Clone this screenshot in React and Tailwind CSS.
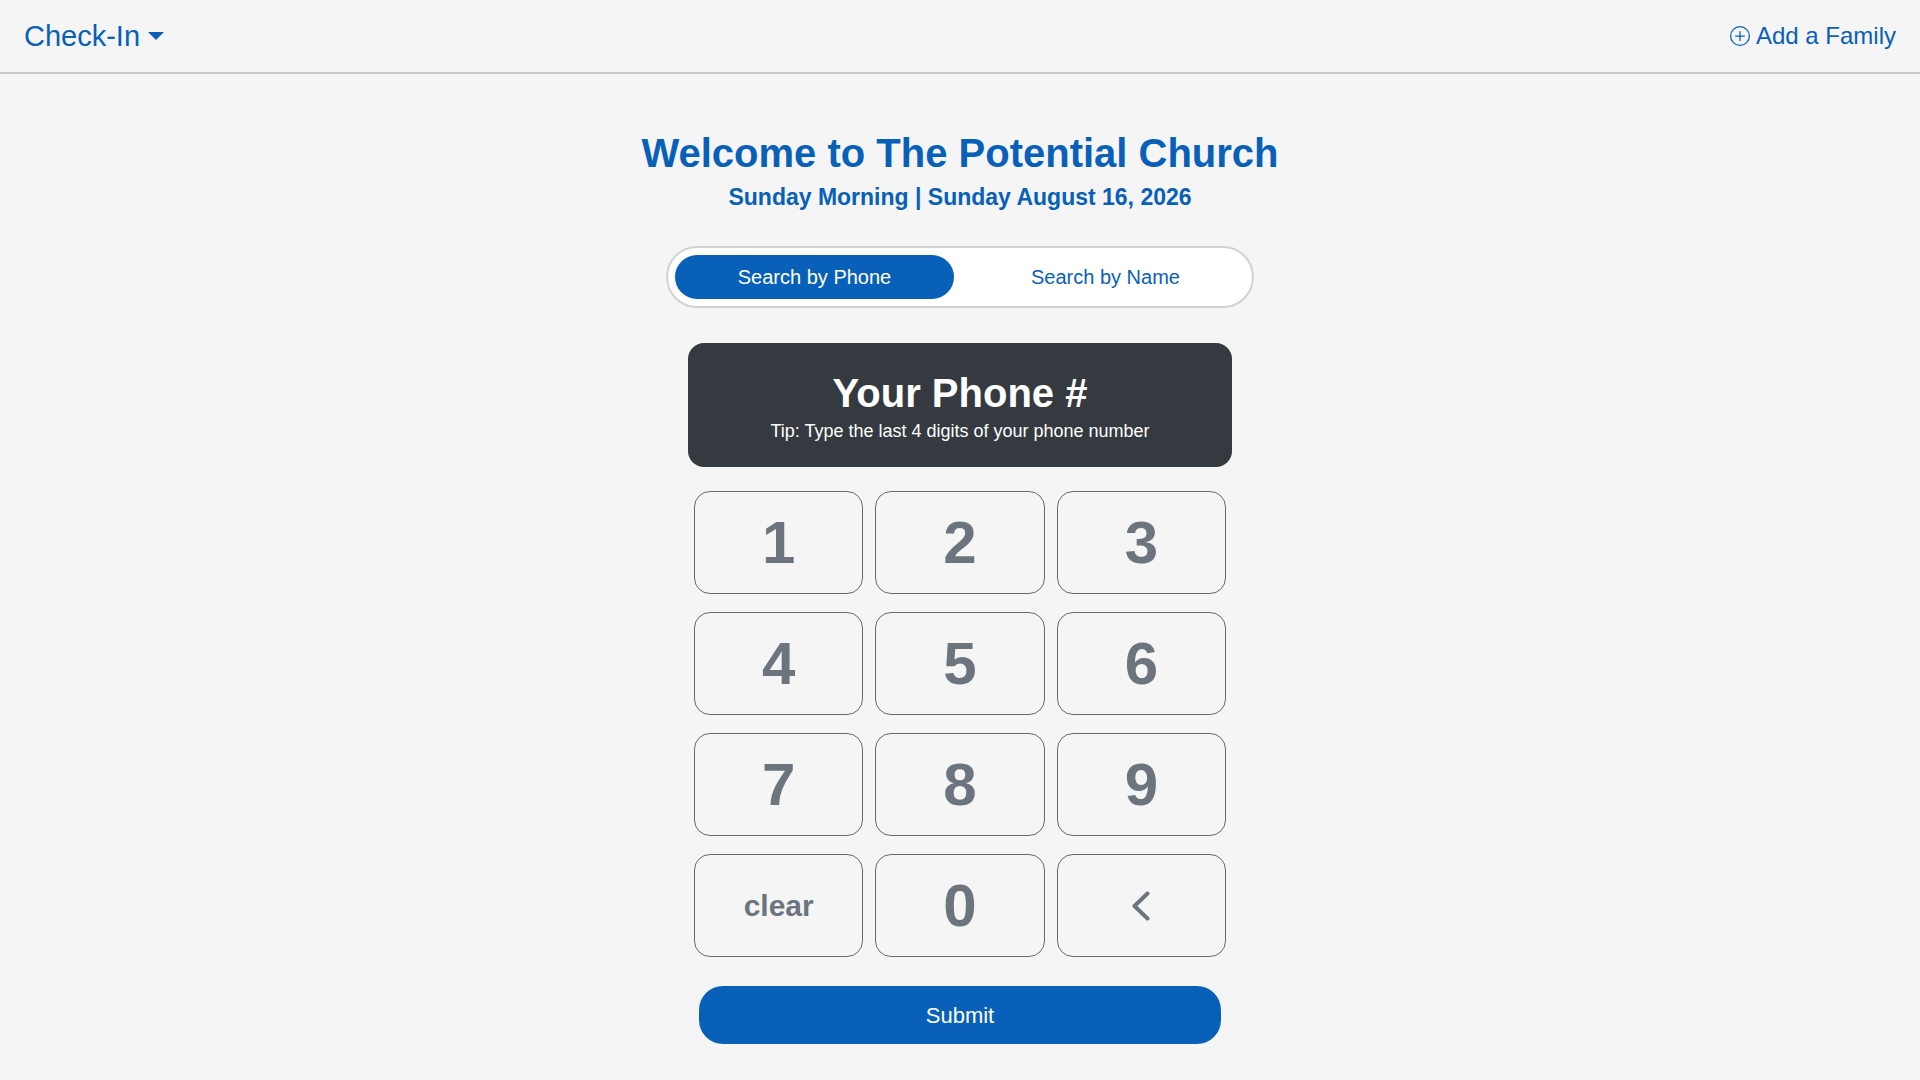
import React, { useState } from 'react';
import clsx from 'clsx';
import { BsPlusCircle } from 'react-icons/bs';

const digitKeys = ['1', '2', '3', '4', '5', '6', '7', '8', '9'];

function Key({ children, className, ...props }) {
    return (
        <button
            type="button"
            className={clsx(
                'h-[103px] flex items-center justify-center rounded-2xl border border-[#68696b] text-[#6c757d] font-bold hover:bg-gray-200',
                className
            )}
            {...props}
        >
            {children}
        </button>
    );
}

function SearchTab({ active, children, ...props }) {
    return (
        <button
            type="button"
            aria-pressed={active}
            className={clsx(
                'h-11 flex-1 rounded-full text-xl',
                active ? 'bg-[#0860b8] text-white' : 'text-[#0860b8]'
            )}
            {...props}
        >
            {children}
        </button>
    );
}

export default function App() {
    const [mode, setMode] = useState('phone');
    const [value, setValue] = useState('');

    const placeholder = mode === 'phone' ? 'Your Phone #' : 'Your Name';

    return (
        <div className="min-h-screen bg-[#f5f5f5] font-['Liberation_Sans',Arial,sans-serif] text-[#0860b8]">
            {/* Top bar */}
            <header className="h-[74px] px-6 flex items-center justify-between border-b-2 border-[#c9c9c9]">
                <button type="button" className="flex items-center gap-2 text-[29px] leading-8">
                    Check-In
                    <svg width="16" height="8" viewBox="0 0 16 8" fill="currentColor" aria-hidden="true">
                        <path d="M0 0h16L8 8z" />
                    </svg>
                </button>
                <a href="#add-family" className="flex items-center gap-1.5 text-2xl leading-8">
                    <BsPlusCircle size={20} />
                    Add a Family
                </a>
            </header>

            <main className="px-6 pt-[53px] pb-9 flex flex-col items-center">
                <h1 className="text-[40px] leading-[52px] text-center font-bold">
                    Welcome to The Potential Church
                </h1>
                <p className="mt-1 text-[23px] leading-7 text-center font-bold">
                    Sunday Morning | Sunday August 16, 2026
                </p>

                {/* Search mode */}
                <div className="mt-[35px] w-full max-w-[588px] p-[7px] flex gap-3 rounded-full border-2 border-[#d2d2d2] bg-white">
                    <SearchTab active={mode === 'phone'} onClick={() => setMode('phone')}>
                        Search by Phone
                    </SearchTab>
                    <SearchTab active={mode === 'name'} onClick={() => setMode('name')}>
                        Search by Name
                    </SearchTab>
                </div>

                {/* Display */}
                <div className="mt-[35px] w-full max-w-[544px] p-6 rounded-2xl bg-[#343a40] text-white text-center">
                    <output className="block text-[40px] leading-[52px] font-bold">
                        {value || placeholder}
                    </output>
                    <p className="text-lg leading-6">Tip: Type the last 4 digits of your phone number</p>
                </div>

                {/* Keypad */}
                <div className="mt-6 w-full max-w-[532px] grid grid-cols-3 gap-x-3 gap-y-[18px]">
                    {digitKeys.map((digit) => (
                        <Key key={digit} className="text-6xl" onClick={() => setValue(value + digit)}>
                            {digit}
                        </Key>
                    ))}
                    <Key className="text-3xl" onClick={() => setValue('')}>
                        clear
                    </Key>
                    <Key className="text-6xl" onClick={() => setValue(value + '0')}>
                        0
                    </Key>
                    <Key aria-label="Delete last digit" onClick={() => setValue(value.slice(0, -1))}>
                        <svg
                            width="18"
                            height="30"
                            viewBox="0 0 18 30"
                            fill="none"
                            stroke="currentColor"
                            strokeWidth="4"
                            strokeLinecap="round"
                            strokeLinejoin="round"
                        >
                            <path d="M15.5 2.5 2.5 15l13 12.5" />
                        </svg>
                    </Key>
                </div>

                <button
                    type="submit"
                    className="mt-[29px] h-[58px] w-full max-w-[522px] rounded-3xl bg-[#0860b8] text-[22px] text-white"
                >
                    Submit
                </button>
            </main>
        </div>
    );
}
